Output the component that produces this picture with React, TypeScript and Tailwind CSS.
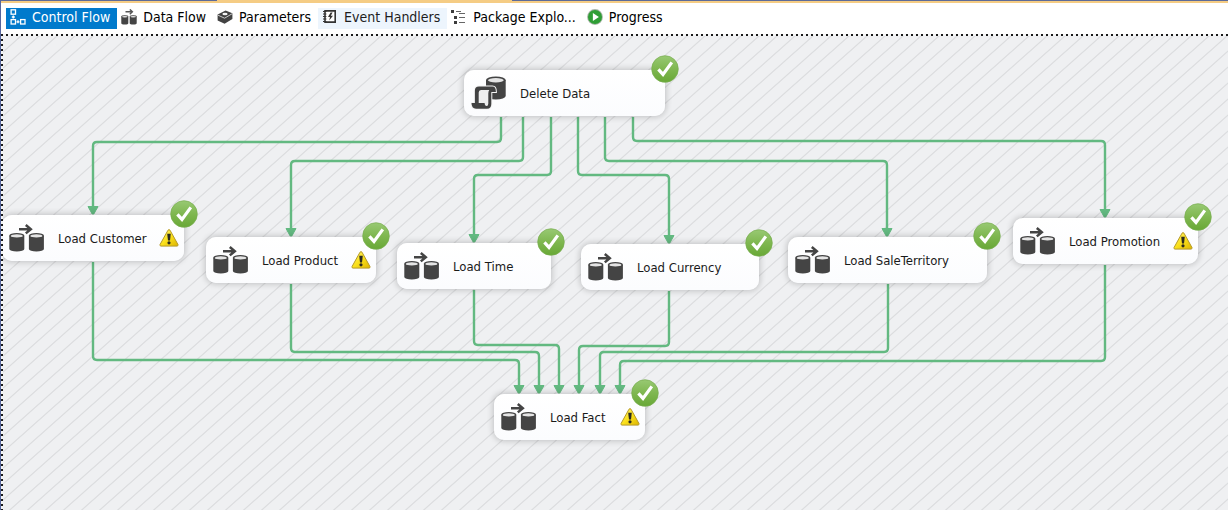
import type { ReactNode } from "react";

type IconProps = { className?: string };

function ControlFlowIcon() {
  return (
    <svg viewBox="0 0 16 16" className="size-4" fill="none" stroke="currentColor" strokeWidth="1.3" aria-hidden="true">
      <rect x="1.1" y="0.8" width="4.4" height="4.4" />
      <rect x="1.1" y="10.6" width="4.4" height="4.4" />
      <rect x="10.6" y="10.6" width="4.4" height="4.4" />
      <path d="M3.3 6.5v3M1.8 8h3M6.5 12.8h3M8 11.3v3" />
    </svg>
  );
}

function Cylinder({ x, y, w, h }: { x: number; y: number; w: number; h: number }) {
  const ry = w * 0.18;
  return (
    <g>
      <path
        d={`M${x} ${y + ry}v${h - 2 * ry}a${w / 2} ${ry} 0 0 0 ${w} 0v${-(h - 2 * ry)}z`}
        fill="#444444"
      />
      <ellipse cx={x + w / 2} cy={y + ry} rx={w / 2} ry={ry} fill="#444444" />
      <ellipse cx={x + w / 2} cy={y + ry + 0.2} rx={w / 2 - w * 0.1} ry={ry * 0.62} fill="#e4e4e4" />
    </g>
  );
}

function DataFlowIcon({ className }: IconProps) {
  return (
    <svg viewBox="0 0 36 28" className={className} aria-hidden="true">
      <Cylinder x={0.3} y={9} w={15} h={18.6} />
      <Cylinder x={19.9} y={9} w={15} h={18.6} />
      <path d="M10 5.200h11.500M16.800 1l5 4.200-5 4.200" fill="none" stroke="#444444" strokeWidth="2.500" />
    </svg>
  );
}

function SmallDataFlowIcon() {
  return (
    <svg viewBox="0 0 16 16" className="size-4" aria-hidden="true">
      <Cylinder x={0.3} y={6.2} w={7} h={9.4} />
      <Cylinder x={8.7} y={6.2} w={7} h={9.4} />
      <path d="M4.500 2.800h6.500M8.800 0.400l2.600 2.400-2.600 2.400" fill="none" stroke="#555555" strokeWidth="1.400" />
    </svg>
  );
}

function ParametersIcon() {
  return (
    <svg viewBox="0 0 16 16" className="size-4" aria-hidden="true">
      <path d="M0.600 5.600 8.600 1.400l6.800 2.800v5.800L7.600 14.800 0.600 11.400z" fill="#424242" />
      <path d="M1 6.200 7.600 9.200l7.400-4.400" fill="none" stroke="#d8d8d8" strokeWidth="0.900" />
      <ellipse cx="8" cy="5" rx="2.600" ry="1.300" fill="#f4f4f4" />
    </svg>
  );
}

function EventIcon() {
  return (
    <svg viewBox="0 0 16 16" className="size-4" aria-hidden="true">
      <path d="M3 1.900h10.200v11.200H3z" fill="#ffffff" stroke="#333333" strokeWidth="1.600" />
      <path d="M1 2.500h3.400M1 5h3.400M1 7.500h3.400M1 10h3.400M1 12.500h3.400" stroke="#333333" strokeWidth="1.200" />
      <path d="M8.600 3.600 6 8h2L7.200 11.400 11 6.800H8.800L10.600 3.600z" fill="#333333" />
    </svg>
  );
}

function PackageIcon() {
  return (
    <svg viewBox="0 0 16 16" className="size-4" aria-hidden="true" fill="#3c3c3c">
      <path d="M0 1h3v3H0zM3 7h3v3H3zM3 12h3v3H3z" />
      <path d="M5 2h5v1H5zM8 4h6v1H8zM8 8h6v1H8zM8 13h6v1H8z" fill="#666666" />
    </svg>
  );
}

function ProgressIcon() {
  return (
    <svg viewBox="0 0 16 16" className="size-4" aria-hidden="true">
      <circle cx="8" cy="8" r="7.900" fill="#a9b5a9" />
      <circle cx="8" cy="8" r="7" fill="#2f9e35" />
      <path d="M5.900 4v8l6-4z" fill="#ffffff" />
    </svg>
  );
}

function ScriptDatabaseIcon({ className }: IconProps) {
  return (
    <svg viewBox="0 0 36 34" className={className} aria-hidden="true">
      <Cylinder x={15} y={0.5} w={19.7} h={23} />
      <path
        d="M3.900 27V14.500Q3.900 10.600 8 10.600H21.500Q24.900 10.600 24.900 16H20.300V28Q20.300 32.700 16 32.700H5Q0.500 32.700 0.500 27z"
        fill="#424242"
        stroke="#f4f4f4"
        strokeWidth="2"
        paintOrder="stroke"
      />
      <path
        d="M7.700 27V16.500Q7.700 14 10 14H18.300Q17.300 15.200 17.300 17.500V27.500Q17.300 30 15.600 30 13.800 30 13.600 27z"
        fill="#eeeeee"
      />
    </svg>
  );
}

function WarningIcon() {
  return (
    <svg viewBox="0 0 20 18" className="h-[18px] w-5" role="img" aria-label="Warning">
      <defs>
        <linearGradient id="warning-fill" x1="0" y1="0" x2="1" y2="1">
          <stop offset="0" stopColor="#fff27a" />
          <stop offset="0.5" stopColor="#fbe11c" />
          <stop offset="1" stopColor="#dcb400" />
        </linearGradient>
      </defs>
      <path
        d="M9 1.200Q10 0 11 1.200L19 15.600q.4 1.400-1 1.500H2Q.6 17 1 15.600z"
        fill="url(#warning-fill)"
        stroke="#b59a2a"
        strokeWidth="1"
      />
      <path d="M8.200 4.800h3.600l-.8 6.600H9z" fill="#2b2a20" />
      <circle cx="10" cy="13.800" r="1.600" fill="#2b2a20" />
    </svg>
  );
}

function SuccessBadge() {
  return (
    <svg viewBox="0 0 28 28" className="absolute -top-[15px] -right-[14px] size-7" role="img" aria-label="Succeeded">
      <defs>
        <linearGradient id="success-fill" x1="0" y1="0" x2="0" y2="1">
          <stop offset="0" stopColor="#98c973" />
          <stop offset="0.5" stopColor="#7fb750" />
          <stop offset="1" stopColor="#68a836" />
        </linearGradient>
      </defs>
      <circle cx="14" cy="14" r="13.300" fill="url(#success-fill)" stroke="#79ae50" strokeWidth="0.700" />
      <path d="M7.400 14.400l4.600 5 8.800-12" fill="none" stroke="#ffffff" strokeWidth="3.200" />
    </svg>
  );
}

const tabs: { label: string; icon: ReactNode; style: string }[] = [
  { label: "Control Flow", icon: <ControlFlowIcon />, style: "bg-[#007acc] text-white" },
  { label: "Data Flow", icon: <SmallDataFlowIcon />, style: "text-black" },
  { label: "Parameters", icon: <ParametersIcon />, style: "text-black" },
  { label: "Event Handlers", icon: <EventIcon />, style: "bg-[#edf5fd] text-[#1e1e1e]" },
  { label: "Package Explo...", icon: <PackageIcon />, style: "text-black" },
  { label: "Progress", icon: <ProgressIcon />, style: "text-black" },
];

type Task = { name: string; place: string; warning?: boolean; script?: boolean };

const tasks: Task[] = [
  { name: "Delete Data", place: "left-[461px] top-[34px] w-[201px]", script: true },
  { name: "Load Customer", place: "-left-[1px] top-[179px] w-[182px]", warning: true },
  { name: "Load Product", place: "left-[203px] top-[201px] w-[170px]", warning: true },
  { name: "Load Time", place: "left-[394px] top-[207px] w-[154px]" },
  { name: "Load Currency", place: "left-[578px] top-[208px] w-[178px]" },
  { name: "Load SaleTerritory", place: "left-[785px] top-[201px] w-[199px]" },
  { name: "Load Promotion", place: "left-[1010px] top-[182px] w-[185px]", warning: true },
  { name: "Load Fact", place: "left-[491px] top-[358px] w-[151px]", warning: true },
];

type Edge = { x1: number; y1: number; bend: number; x2: number; y2: number };

const edges: Edge[] = [
  { x1: 498, y1: 81, bend: 106, x2: 90, y2: 179 },
  { x1: 520, y1: 81, bend: 125, x2: 288, y2: 201 },
  { x1: 548, y1: 81, bend: 139, x2: 471, y2: 207 },
  { x1: 575, y1: 81, bend: 139, x2: 666, y2: 208 },
  { x1: 602, y1: 81, bend: 125, x2: 884, y2: 201 },
  { x1: 630, y1: 81, bend: 105, x2: 1102, y2: 182 },
  { x1: 90, y1: 226, bend: 324, x2: 516, y2: 358 },
  { x1: 288, y1: 248, bend: 316, x2: 536, y2: 358 },
  { x1: 471, y1: 254, bend: 309, x2: 556, y2: 358 },
  { x1: 666, y1: 255, bend: 310, x2: 576, y2: 358 },
  { x1: 885, y1: 248, bend: 316, x2: 597, y2: 358 },
  { x1: 1102, y1: 229, bend: 325, x2: 617, y2: 358 },
];

function edgePath({ x1, y1, bend, x2, y2 }: Edge) {
  const r = 4;
  const dir = x2 > x1 ? r : -r;
  return `M${x1} ${y1}V${bend - r}Q${x1} ${bend} ${x1 + dir} ${bend}H${x2 - dir}Q${x2} ${bend} ${x2} ${bend + r}V${y2 - 6}`;
}

function Connectors() {
  return (
    <svg className="absolute inset-0 size-full" aria-hidden="true">
      <defs>
        <pattern id="hatch" width="18" height="16" patternUnits="userSpaceOnUse">
          <path d="M-9 24L27 -8M-9 8L9 -8M9 24L27 8" stroke="#dcdddf" strokeWidth="1.300" />
        </pattern>
      </defs>
      <rect width="100%" height="100%" fill="url(#hatch)" />
      {edges.map((edge) => (
        <g key={`${edge.x1}-${edge.x2}`}>
          <path d={edgePath(edge)} fill="none" stroke="#63b981" strokeWidth="2.400" />
          <path
            d={`M${edge.x2 - 5} ${edge.y2 - 8.5}h10l-4.200 7.500h-1.600z`}
            fill="#63b981"
            stroke="#63b981"
            strokeWidth="1"
            strokeLinejoin="round"
          />
        </g>
      ))}
    </svg>
  );
}

function TaskNode({ name, place, warning, script }: Task) {
  return (
    <div
      className={`absolute flex h-[46px] items-center rounded-[10px] bg-linear-to-b from-white to-[#fbfcfe] pr-[5px] pl-[7px] shadow-[0_0_6px_1px_rgba(0,0,0,0.2)] ${place}`}
    >
      {script ? <ScriptDatabaseIcon className="h-[34px] w-9" /> : <DataFlowIcon className="h-7 w-9" />}
      <span className="ml-[13px] flex-1 pt-0.5 whitespace-nowrap">{name}</span>
      {warning && <WarningIcon />}
      <SuccessBadge />
    </div>
  );
}

export default function App() {
  return (
    <div className="flex min-h-screen flex-col border-l border-[#55659c] bg-white font-['DejaVu_Sans_Condensed','DejaVu_Sans',sans-serif]">
      <div className="h-[3px] bg-[#f5cc84]">
        <div className="flex h-px">
          <div className="w-[216px] bg-[#5d6b99]" />
          <div className="w-[295px]" />
          <div className="flex-1 bg-[#5d6b99]" />
        </div>
      </div>
      <nav className="flex h-[31px] items-start pt-[5px] pl-[5px] text-[14px]" aria-label="Designer views">
        {tabs.map((tab) => (
          <button
            key={tab.label}
            type="button"
            className={`flex h-[21px] items-center gap-[6px] pr-[7px] pb-[3px] pl-1 leading-4 whitespace-nowrap ${tab.style}`}
          >
            {tab.icon}
            {tab.label}
          </button>
        ))}
      </nav>
      <div className="h-[2px] bg-[repeating-linear-gradient(90deg,#1a1a1a_0_2px,#f4f5f6_2px_5px)]" />
      <div className="flex flex-1">
        <div className="w-[2px] bg-[repeating-linear-gradient(180deg,#f4f5f6_0_3px,#1a1a1a_3px_5px)]" />
        <main className="relative min-h-[460px] flex-1 overflow-hidden bg-[#eff0f2] text-[13px] leading-5 text-[#1a1a1a]">
          <Connectors />
          {tasks.map((task) => (
            <TaskNode key={task.name} {...task} />
          ))}
        </main>
      </div>
    </div>
  );
}
